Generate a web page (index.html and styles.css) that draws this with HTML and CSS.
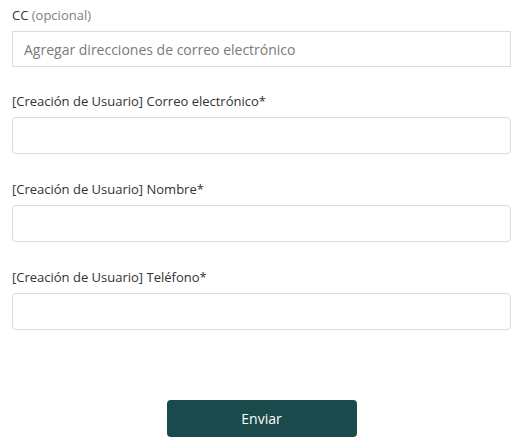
FILE: index.html
```html
<!DOCTYPE html>
<html lang="es">
<head>
<meta charset="utf-8">
<link rel="stylesheet" href="styles.css">
</head>
<body>
<form class="form">
  <div class="field">
    <label class="label">CC <span class="muted">(opcional)</span></label>
    <input class="input input-square" type="text" placeholder="Agregar direcciones de correo electrónico">
  </div>
  <div class="field">
    <label class="label">[Creación de Usuario] Correo electrónico*</label>
    <input class="input" type="text">
  </div>
  <div class="field field-spaced">
    <label class="label">[Creación de Usuario] Nombre*</label>
    <input class="input" type="text">
  </div>
  <div class="field field-spaced">
    <label class="label">[Creación de Usuario] Teléfono*</label>
    <input class="input" type="text">
  </div>
  <div class="actions">
    <button class="btn" type="button">Enviar</button>
  </div>
</form>
</body>
</html>
```
FILE: styles.css
```css
html, body {
  margin: 0;
  padding: 0;
  background: #ffffff;
}
body {
  font-family: "Open Sans", "Liberation Sans", sans-serif;
  color: #333333;
}
.form {
  width: 499px;
  padding: 5px 16px 0 12px;
  display: flex;
  flex-direction: column;
  gap: 24px;
}
.field {
  display: flex;
  flex-direction: column;
  gap: 6px;
}
.field-spaced {
  margin-top: 1px;
}
.label {
  font-size: 13px;
  line-height: 20px;
  color: #333333;
}
.muted {
  color: #808080;
}
.input {
  box-sizing: border-box;
  width: 100%;
  height: 37px;
  margin: 0;
  padding: 0 11px;
  border: 1px solid #dcdcdc;
  border-radius: 4px;
  font-family: "Open Sans", "Liberation Sans", sans-serif;
  font-size: 14px;
  color: #333333;
  background: #ffffff;
  outline: none;
}
.input-square {
  height: 36px;
  border-radius: 0;
}
.input::placeholder {
  color: #7a7a7a;
}
.actions {
  display: flex;
  justify-content: center;
  padding-top: 46px;
}
.btn {
  width: 190px;
  height: 37px;
  border: none;
  border-radius: 4px;
  background: #1a4a4c;
  color: #ffffff;
  font-family: "Open Sans", "Liberation Sans", sans-serif;
  font-size: 14px;
  font-weight: 400;
  cursor: pointer;
}
```
